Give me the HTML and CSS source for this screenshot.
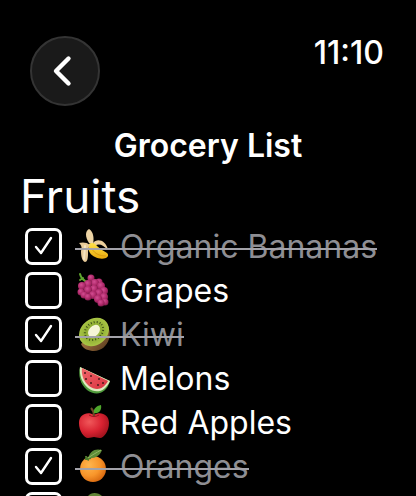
FILE: index.html
```html
<!DOCTYPE html>
<html lang="en">
<head>
    <meta charset="UTF-8">
    <meta name="viewport" content="width=device-width, initial-scale=1.0">
    <title>Grocery List</title>
    <link rel="stylesheet" href="styles.css">
</head>
<body>
    <header class="topbar">
        <button type="button" class="back" aria-label="Back">
            <svg viewBox="0 0 20 32" width="20" height="32"><path d="M16.5 3.5 4 16 16.500 28.500" fill="none" stroke="#fff" stroke-width="4.400" stroke-linecap="round" stroke-linejoin="round"/></svg>
        </button>
        <time class="clock">11:10</time>
    </header>

    <main>
        <h1 class="title">Grocery List</h1>
        <h2 class="section">Fruits</h2>
        <ul class="items">
            <li class="item">
                <input type="checkbox" class="tick" id="bananas" checked>
                <label class="name" for="bananas">
                    <!-- Banana -->
                    <svg class="icon" viewBox="0 0 36 36">
                        <defs>
                            <linearGradient id="peel" x1="0" y1="0" x2="0" y2="1"><stop offset="0" stop-color="#ffe24a"/><stop offset="1" stop-color="#e9a90c"/></linearGradient>
                        </defs>
                        <path d="M14 14C10 8 10 2 14 0 19 3 19 10 18 16Z" fill="#ecd3a4"/>
                        <path d="M18 14C22 9 31 11 33 21 28 16 24 14 20 17Z" fill="#eccf9c"/>
                        <path d="M14 15C17 13 20 14 22 17 25 20 29 22 32 24 34 26 33 28 31 29 25 31 18 28 15 24 13 21 13 18 14 15Z" fill="url(#peel)"/>
                        <path d="M17 20C20 25 25 27 31 27" fill="none" stroke="#d99b10" stroke-width="1"/>
                        <path d="M4 14C7 13 12 13 15 16 13 18 13 21 13 25 13 30 12 33 10 33 7 32 6 27 6 22 7 19 7 17 4 14Z" fill="#e8cb9a"/>
                        <path d="M10 17 9 30" fill="none" stroke="#f6e4c0" stroke-width="2" stroke-linecap="round"/>
                    </svg>
                    Organic Bananas
                </label>
            </li>
            <li class="item">
                <input type="checkbox" class="tick" id="grapes">
                <label class="name" for="grapes">
                    <!-- Grapes -->
                    <svg class="icon" viewBox="0 0 36 36">
                        <defs>
                            <radialGradient id="grape" cx=".4" cy=".35" r=".7"><stop offset="0" stop-color="#d34d92"/><stop offset=".6" stop-color="#ad2868"/><stop offset="1" stop-color="#741944"/></radialGradient>
                        </defs>
                        <path d="M5 1C6 6 9 8 14 10M5 7 8 5" fill="none" stroke="#5fa52e" stroke-width="2" stroke-linecap="round"/>
                        <g fill="url(#grape)">
                            <circle cx="24" cy="9" r="3.500"/><circle cx="16" cy="5" r="3.500"/><circle cx="20" cy="10" r="4"/>
                            <circle cx="13" cy="11" r="4"/><circle cx="26" cy="13" r="4"/><circle cx="7" cy="13" r="4"/>
                            <circle cx="29" cy="18" r="4"/><circle cx="19" cy="16" r="4"/><circle cx="13" cy="17" r="4"/>
                            <circle cx="6" cy="19" r="3.500"/><circle cx="24" cy="20" r="4"/><circle cx="18" cy="22" r="4"/>
                            <circle cx="9" cy="22" r="3.500"/><circle cx="13" cy="24" r="3.500"/><circle cx="29" cy="24" r="4"/>
                            <circle cx="23" cy="26" r="4"/><circle cx="30" cy="29" r="3.500"/><circle cx="26" cy="30" r="3.500"/>
                        </g>
                    </svg>
                    Grapes
                </label>
            </li>
            <li class="item">
                <input type="checkbox" class="tick" id="kiwi" checked>
                <label class="name" for="kiwi">
                    <!-- Kiwi -->
                    <svg class="icon" viewBox="0 0 36 36">
                        <defs>
                            <radialGradient id="flesh"><stop offset="0" stop-color="#ccd878"/><stop offset=".5" stop-color="#8fae33"/><stop offset="1" stop-color="#a9c545"/></radialGradient>
                            <linearGradient id="fuzz" x1="0" y1="0" x2="1" y2="1"><stop offset=".5" stop-color="#93683a"/><stop offset="1" stop-color="#4d3218"/></linearGradient>
                        </defs>
                        <path d="M28 4C34 8 36 15 34 22 32 29 26 34 19 34 14 34 8 32 6 27Z" fill="url(#fuzz)"/>
                        <ellipse cx="19" cy="15" rx="16" ry="13" transform="rotate(-38 19 15)" fill="url(#flesh)"/>
                        <ellipse cx="19" cy="14" rx="10" ry="8" transform="rotate(-42 19 14)" fill="none" stroke="#3d4d1a" stroke-width="2" stroke-dasharray="1 2"/>
                        <ellipse cx="19" cy="14" rx="7" ry="5" transform="rotate(-48 19 14)" fill="#f5f5d6"/>
                    </svg>
                    Kiwi
                </label>
            </li>
            <li class="item">
                <input type="checkbox" class="tick" id="melons">
                <label class="name" for="melons">
                    <!-- Melon slice -->
                    <svg class="icon" viewBox="0 0 36 36">
                        <defs>
                            <linearGradient id="melon" x1="0" y1="0" x2="1" y2="1"><stop offset="0" stop-color="#f0666a"/><stop offset="1" stop-color="#d9323f"/></linearGradient>
                        </defs>
                        <path d="M5 6C3 14 5 23 12 29 20 35 31 34 35 20Z" fill="#4f9a3c"/>
                        <path d="M5 6C4 14 7 22 13 27 21 33 30 31 35 20Z" fill="#dfe8bf"/>
                        <path d="M7 7C6 14 9 21 14 25 21 30 28 29 33 20Z" fill="url(#melon)"/>
                        <g fill="#4b1a1a">
                            <circle cx="10" cy="12" r="1"/><circle cx="16" cy="15" r="1"/><circle cx="11" cy="18" r="1"/>
                            <circle cx="16" cy="22" r="1"/><circle cx="24" cy="18" r="1"/><circle cx="23" cy="24" r="1"/>
                            <circle cx="28" cy="22" r="1"/>
                        </g>
                    </svg>
                    Melons
                </label>
            </li>
            <li class="item">
                <input type="checkbox" class="tick" id="apples">
                <label class="name" for="apples">
                    <!-- Apple -->
                    <svg class="icon" viewBox="0 0 36 36">
                        <defs>
                            <radialGradient id="apple" cx=".35" cy=".35" r=".7"><stop offset="0" stop-color="#f0585a"/><stop offset=".6" stop-color="#d92231"/><stop offset="1" stop-color="#a5141f"/></radialGradient>
                        </defs>
                        <path d="M19 10C25 6 34 9 34 18 34 26 29 33 25 33 22 33 21 32 19 32 17 32 16 33 13 33 9 33 4 26 4 18 4 9 13 6 19 10Z" fill="url(#apple)"/>
                        <path d="M14 10C17 12 21 12 24 10" fill="none" stroke="#99131e" stroke-width="1"/>
                        <path d="M19 11C19 7 18 5 16 3" fill="none" stroke="#6b4a26" stroke-width="2"/>
                        <path d="M19 8C18 4 21 1 26 0 27 5 24 9 19 8Z" fill="#4ea62c"/>
                    </svg>
                    Red Apples
                </label>
            </li>
            <li class="item">
                <input type="checkbox" class="tick" id="oranges" checked>
                <label class="name" for="oranges">
                    <!-- Orange -->
                    <svg class="icon" viewBox="0 0 36 36">
                        <defs>
                            <radialGradient id="orange" cx=".35" cy=".35" r=".7"><stop offset="0" stop-color="#ffb64f"/><stop offset=".6" stop-color="#f8952a"/><stop offset="1" stop-color="#d96a10"/></radialGradient>
                        </defs>
                        <circle cx="18" cy="20" r="13" fill="url(#orange)"/>
                        <path d="M11 7C11 9 12 10 14 11M10 10 16 9" fill="none" stroke="#4c7a2b" stroke-width="2"/>
                        <path d="M13 9C15 2 20 -1 27 1 25 7 19 10 13 9Z" fill="#5d8d37"/>
                        <path d="M13 9C17 6 21 4 26 1" fill="none" stroke="#93b565" stroke-width="1"/>
                    </svg>
                    Oranges
                </label>
            </li>
            <li class="item">
                <input type="checkbox" class="tick" id="pears" aria-label="Pears">
                <span class="name">
                    <!-- Pear -->
                    <svg class="icon" viewBox="0 0 36 36">
                        <path d="M13 3C16 -1 23 -1 27 3 31 13 33 34 18 34 4 34 8 13 13 3Z" fill="#5f8335"/>
                    </svg>
                </span>
            </li>
        </ul>
    </main>
</body>
</html>
```

FILE: styles.css
```css
* {
    box-sizing: border-box;
}
body {
    margin: 0;
    height: 100vh;
    overflow: hidden;
    background: #000;
    color: #fff;
    font-family: Inter, "Liberation Sans", sans-serif;
}
.topbar {
    display: flex;
    justify-content: space-between;
    align-items: flex-start;
    padding: 36px 32px 0 30px;
}
.back {
    display: flex;
    align-items: center;
    justify-content: center;
    width: 70px;
    height: 70px;
    padding: 0 6px 0 0;
    border: 2px solid #343434;
    border-radius: 50%;
    background: #1a1a1a;
    cursor: pointer;
}
.clock {
    font-size: 32px;
    line-height: 34px;
    font-weight: 500;
}
main {
    height: calc(100vh - 106px);
    padding-top: 20px;
    overflow: hidden;
}
.title {
    margin: 0;
    font-size: 32px;
    line-height: 40px;
    font-weight: 600;
    text-align: center;
}
.section {
    margin: 2px 0 0;
    padding: 0 20px;
    font-size: 46px;
    line-height: 56px;
    font-weight: 400;
}
.items {
    margin: 0;
    padding: 0 0 0 25px;
    list-style: none;
}
.item {
    display: flex;
    align-items: center;
    gap: 13px;
    height: 44px;
}
.tick {
    appearance: none;
    flex: none;
    width: 37px;
    height: 37px;
    margin: 0;
    border: 3px solid #fff;
    border-radius: 7px;
    cursor: pointer;
}
.tick:checked {
    background: url("data:image/svg+xml,%3Csvg xmlns='http://www.w3.org/2000/svg' viewBox='0 0 31 31'%3E%3Cpath d='M8 16 13 22 23 7' fill='none' stroke='white' stroke-width='2.4' stroke-linecap='round' stroke-linejoin='round'/%3E%3C/svg%3E") center / 100% no-repeat;
}
.name {
    display: flex;
    align-items: center;
    gap: 9px;
    position: relative;
    padding-top: 2px;
    font-size: 32px;
    line-height: 38px;
    white-space: nowrap;
}
.icon {
    flex: none;
    width: 36px;
    height: 36px;
    overflow: visible;
}
.tick:checked + .name {
    color: #8e8e93;
}
/* strike runs across the icon as well as the text */
.tick:checked + .name::after {
    content: "";
    position: absolute;
    top: 22px;
    left: 0;
    right: 0;
    height: 2px;
    background: #a3a2a9;
}
```
